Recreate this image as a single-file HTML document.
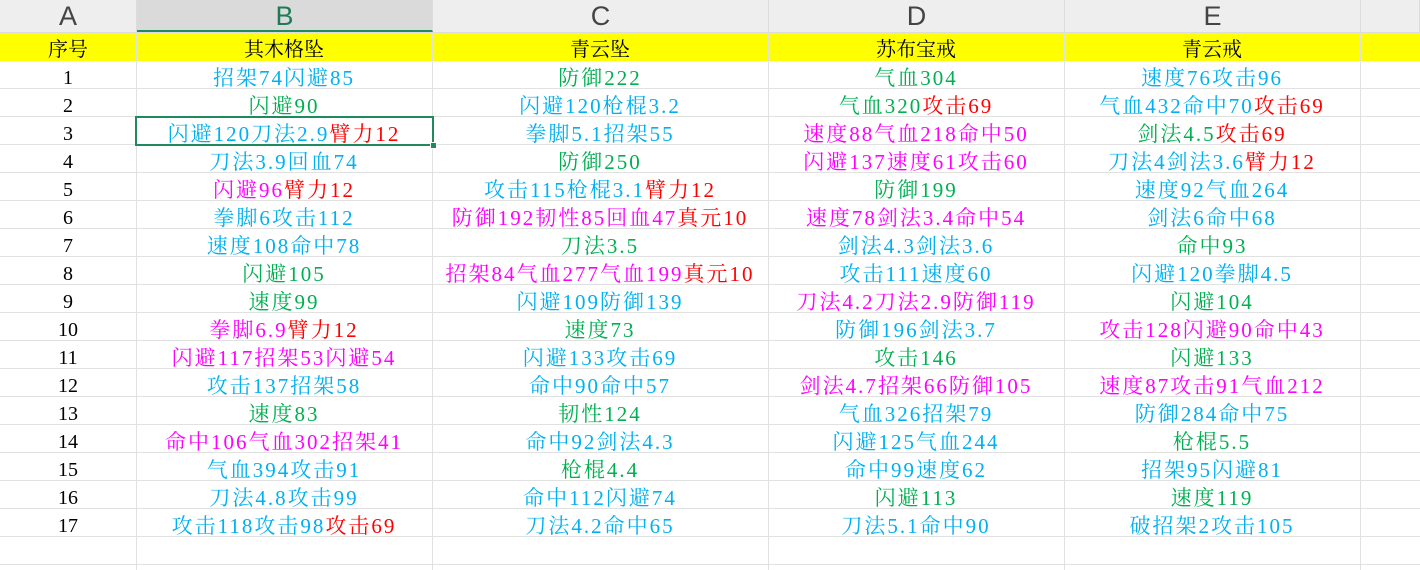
<!DOCTYPE html><html><head><meta charset="utf-8"><style>
body{margin:0;width:1420px;height:570px;overflow:hidden;background:#fff;position:relative;font-family:"Liberation Serif","Noto Serif CJK SC",serif}
.h{position:absolute;top:0;height:32px;background:#eee;border-right:1px solid #dcdcdc;box-sizing:border-box;font-family:"Liberation Sans",sans-serif;font-size:27px;color:#444;text-align:center;line-height:32px}
.hl{position:absolute;left:0;width:1420px;top:32px;height:1px;background:#dcdcdc}
.vl{position:absolute;top:33px;width:1px;height:537px;background:#e1e1e1}
.rl{position:absolute;left:0;width:1420px;height:1px;background:#e1e1e1}
.c{position:absolute;height:28px;line-height:28px;padding-top:3px;text-align:center;font-size:21px;letter-spacing:2px;white-space:nowrap;box-sizing:border-box}
.n{letter-spacing:0;font-size:20px}
.b{color:#00b0f0}.g{color:#00b050}.r{color:#f00}.m{color:#f0f}.k{color:#000}
</style></head><body>
<div class="h" style="left:0;width:137px">A</div>
<div class="h" style="left:137px;width:296px;background:#dadada;color:#1e7b55;border-bottom:2px solid #1e8a5e">B</div>
<div class="h" style="left:433px;width:336px">C</div>
<div class="h" style="left:769px;width:296px">D</div>
<div class="h" style="left:1065px;width:296px">E</div>
<div class="h" style="left:1361px;width:59px"></div>
<div class="hl"></div>
<div style="position:absolute;left:0;top:33px;width:1420px;height:28px;background:#ff0"></div>
<div id="g"></div>
<script>
var xs=[0,136,432,768,1064,1360,1420];
var out='';
for(var i=1;i<6;i++)out+='<div class="vl" style="left:'+xs[i]+'px"></div>';
for(var r=0;r<18;r++)out+='<div class="rl" style="top:'+(88+28*r)+'px"></div>';
var hdr=['序号','其木格坠','青云坠','苏布宝戒','青云戒'];
for(var c=0;c<5;c++)out+='<div class="c k n" style="top:33px;left:'+xs[c]+'px;width:'+(xs[c+1]-xs[c])+'px">'+hdr[c]+'</div>';
var d=[
['b:招架74闪避85','g:防御222','g:气血304','b:速度76攻击96'],
['g:闪避90','b:闪避120枪棍3.2','g:气血320|r:攻击69','b:气血432命中70|r:攻击69'],
['b:闪避120刀法2.9|r:臂力12','b:拳脚5.1招架55','m:速度88气血218命中50','g:剑法4.5|r:攻击69'],
['b:刀法3.9回血74','g:防御250','m:闪避137速度61攻击60','b:刀法4剑法3.6|r:臂力12'],
['m:闪避96|r:臂力12','b:攻击115枪棍3.1|r:臂力12','g:防御199','b:速度92气血264'],
['b:拳脚6攻击112','m:防御192韧性85回血47|r:真元10','m:速度78剑法3.4命中54','b:剑法6命中68'],
['b:速度108命中78','g:刀法3.5','b:剑法4.3剑法3.6','g:命中93'],
['g:闪避105','m:招架84气血277气血199|r:真元10','b:攻击111速度60','b:闪避120拳脚4.5'],
['g:速度99','b:闪避109防御139','m:刀法4.2刀法2.9防御119','g:闪避104'],
['m:拳脚6.9|r:臂力12','g:速度73','b:防御196剑法3.7','m:攻击128闪避90命中43'],
['m:闪避117招架53闪避54','b:闪避133攻击69','g:攻击146','g:闪避133'],
['b:攻击137招架58','b:命中90命中57','m:剑法4.7招架66防御105','m:速度87攻击91气血212'],
['g:速度83','g:韧性124','b:气血326招架79','b:防御284命中75'],
['m:命中106气血302招架41','b:命中92剑法4.3','b:闪避125气血244','g:枪棍5.5'],
['b:气血394攻击91','g:枪棍4.4','b:命中99速度62','b:招架95闪避81'],
['b:刀法4.8攻击99','b:命中112闪避74','g:闪避113','g:速度119'],
['b:攻击118攻击98|r:攻击69','b:刀法4.2命中65','b:刀法5.1命中90','b:破招架2攻击105']];
for(var r=0;r<17;r++){var t=61+28*r;
out+='<div class="c k n" style="top:'+t+'px;left:0;width:136px">'+(r+1)+'</div>';
for(var c=0;c<4;c++){var s=d[r][c].split('|').map(function(p){var q=p.split(':');return '<span class="'+q[0]+'">'+q[1]+'</span>'}).join('');
out+='<div class="c" style="top:'+t+'px;left:'+xs[c+1]+'px;width:'+(xs[c+2]-xs[c+1])+'px">'+s+'</div>';}}
out+='<div style="position:absolute;left:135px;top:116px;width:295px;height:26px;border:2px solid #1e8a5e"></div>';
out+='<div style="position:absolute;left:430px;top:142px;width:5px;height:5px;background:#1e8a5e;border:1px solid #fff"></div>';
document.getElementById('g').innerHTML=out;
</script>
</body></html>
